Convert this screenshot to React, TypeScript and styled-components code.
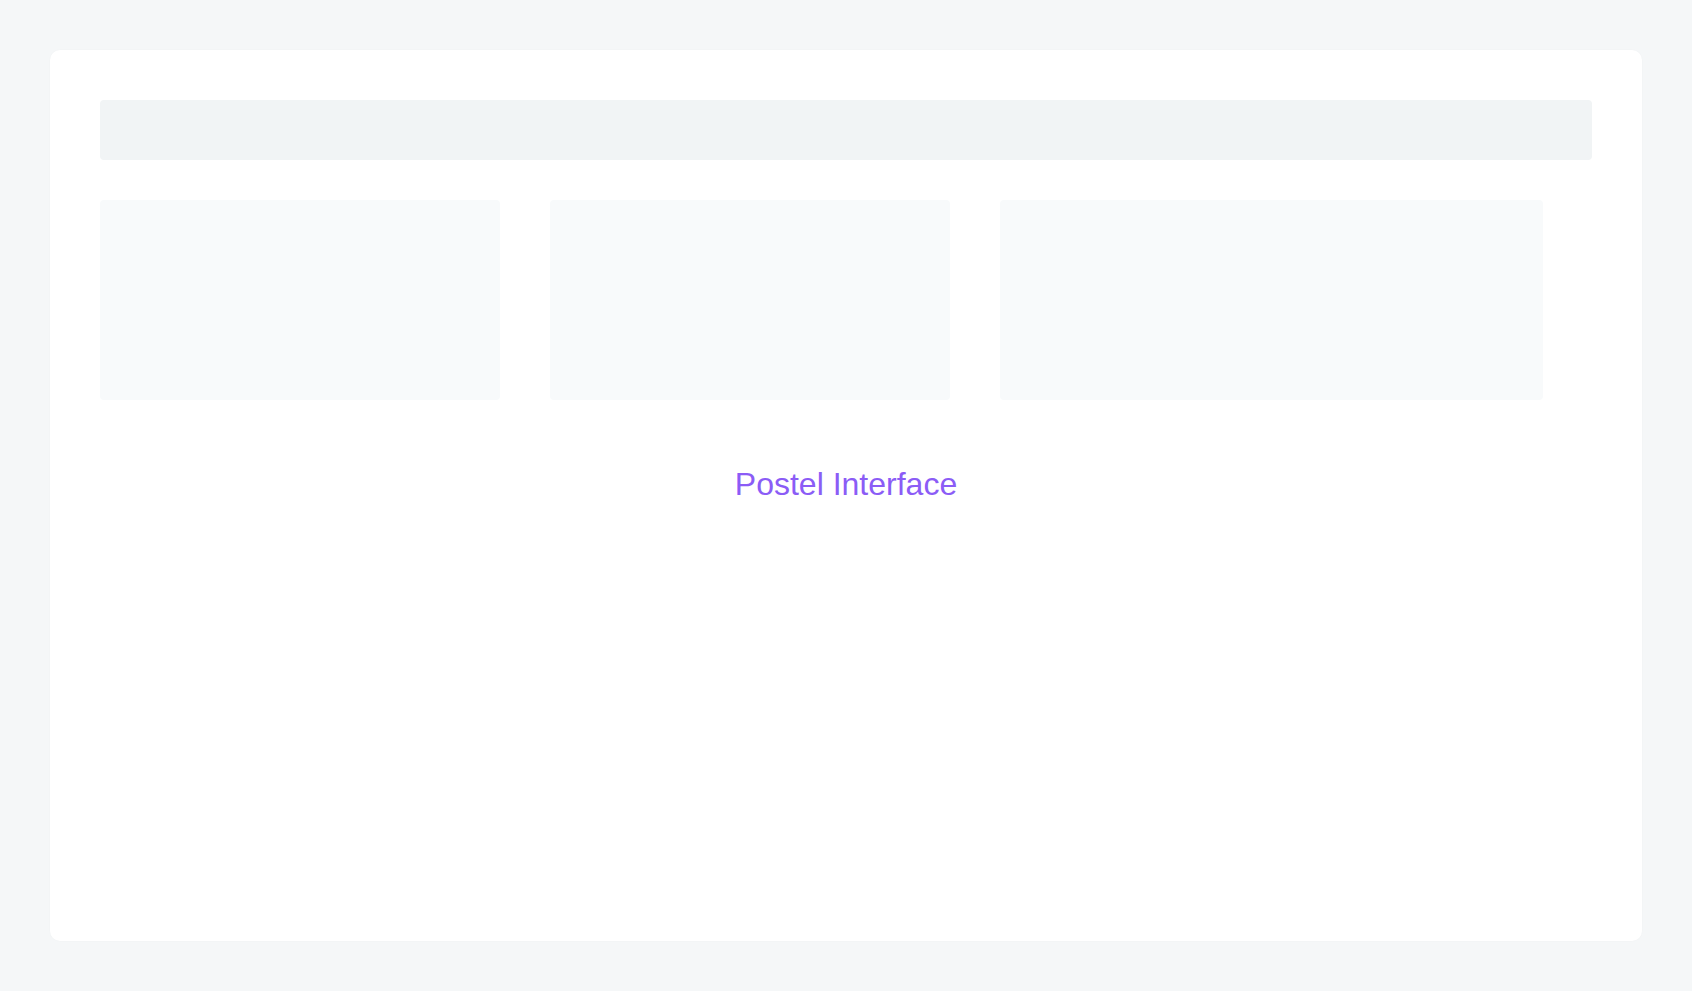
import styled, { createGlobalStyle } from 'styled-components'

const GlobalStyle = createGlobalStyle`
  html, body {
    margin: 0;
    padding: 0;
    background: #f5f7f8;
    font-family: 'Liberation Sans', Arial, sans-serif;
  }
`

export default function App () {
  return (
    <>
      <GlobalStyle />
      <Page>
        <Frame>
          <TopBar />
          <CardRow>
            <Placeholder $width={400} />
            <Placeholder $width={400} />
            <Placeholder $width={543} />
          </CardRow>
          <Title>Postel Interface</Title>
        </Frame>
      </Page>
    </>
  )
}

const Page = styled.main`
  box-sizing: border-box;
  height: 991px;
  padding: 50px;
  display: flex;
`

const Frame = styled.section`
  flex: 1;
  display: flex;
  flex-direction: column;
  padding: 50px;
  background: #ffffff;
  border-radius: 10px;
  box-shadow: 0 0 2px rgba(0, 0, 0, 0.03);
`

const TopBar = styled.div`
  height: 60px;
  border-radius: 4px;
  background: #f1f4f5;
`

const CardRow = styled.div`
  display: flex;
  gap: 50px;
  margin-top: 40px;
`

const Placeholder = styled.div<{ $width: number }>`
  width: ${p => p.$width}px;
  height: 200px;
  border-radius: 4px;
  background: #f8fafb;
`

const Title = styled.h1`
  margin: 66px 0 0;
  text-align: center;
  font-size: 32px;
  font-weight: 400;
  line-height: normal;
  color: #8b5cf6;
`
